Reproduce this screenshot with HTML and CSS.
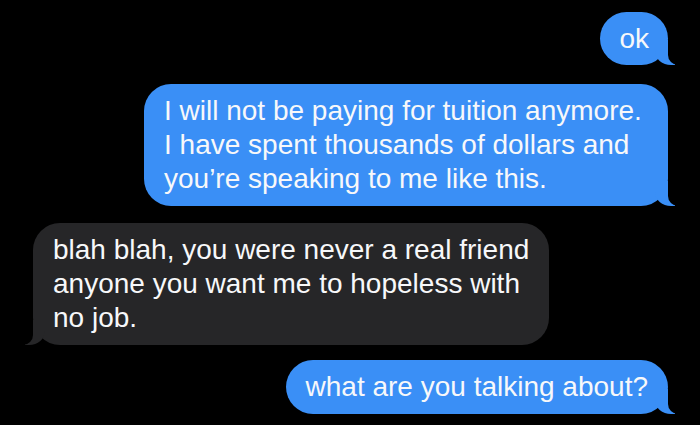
FILE: index.html
```html
<!DOCTYPE html>
<html lang="en">

<head>
  <meta charset="UTF-8">
  <meta name="viewport" content="width=device-width, initial-scale=1.0">
  <title>Messages</title>
  <link rel="stylesheet" href="styles.css">
</head>

<body>
  <div class="thread">
    <div class="bubble sent short">ok</div>

    <div class="bubble sent wide">
      I will not be paying for tuition anymore.<br>
      I have spent thousands of dollars and<br>
      you’re speaking to me like this.
    </div>

    <div class="bubble received">
      blah blah, you were never a real friend<br>
      anyone you want me to hopeless with<br>
      no job.
    </div>

    <div class="bubble sent">what are you talking about?</div>
  </div>
</body>

</html>
```

FILE: styles.css
```css
body {
  margin: 0;
  background-color: #000;
  font-family: "Liberation Sans", Arial, sans-serif;
  color: #fff;
}

.thread {
  display: flex;
  flex-direction: column;
  gap: 17px;
  padding: 12px 32px 0 33px;
}

.bubble {
  position: relative;
  padding: 10px 20px;
  border-radius: 27px;
  font-size: 28px;
  line-height: 34px;
  color: #f7f8fa;
  white-space: nowrap;
}

/* blue, on the right */
.sent {
  align-self: flex-end;
  background-color: #3a8ff6;
}

.short {
  margin-bottom: 2px;
  padding: 10px 19px 9px;
}

.wide {
  width: 524px;
  box-sizing: border-box;
}

/* grey, on the left */
.received {
  align-self: flex-start;
  margin-bottom: -2px;
  background-color: #262628;
}

/* the little tail under each bubble */
.bubble::before,
.bubble::after {
  content: "";
  position: absolute;
  bottom: 0;
  height: 25px;
}

.sent::before {
  right: -7px;
  width: 20px;
  background-color: #3a8ff6;
  border-bottom-left-radius: 16px 14px;
}

.sent::after {
  right: -26px;
  width: 26px;
  background-color: #000;
  border-bottom-left-radius: 10px;
}

.received::before {
  left: -8px;
  width: 20px;
  background-color: #262628;
  border-bottom-right-radius: 16px 14px;
}

.received::after {
  left: -26px;
  width: 26px;
  background-color: #000;
  border-bottom-right-radius: 10px;
}
```
